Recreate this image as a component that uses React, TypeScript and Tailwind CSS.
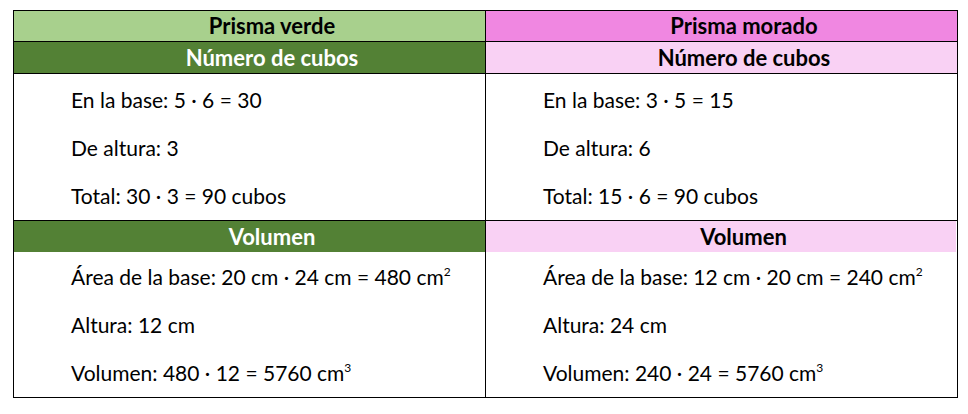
import React from "react";

const font = { fontFamily: "Lato, 'Open Sans', sans-serif" };

function Line({ children }: { children: React.ReactNode }) {
  return <div className="h-[48px] flex items-center pl-[57px] text-[21px] text-black leading-none">{children}</div>;
}

function Sup({ children }: { children: React.ReactNode }) {
  return <span className="text-[12px] relative -top-[9px] align-baseline leading-none">{children}</span>;
}

const head = "flex items-center justify-center pl-[45px] font-bold text-[22px] leading-none";

export default function App() {
  return (
    <div className="w-[968px] h-[414px] bg-white pt-[10px] pl-[13px]" style={font}>
      <div className="w-[945px] border border-black grid grid-cols-[471px_1px_471px]">
        {/* Row 1 */}
        <div className={`h-[31px] bg-[#A8D08D] text-black border-b border-black ${head}`}>Prisma verde</div>
        <div className="bg-black" />
        <div className={`h-[31px] bg-[#F087E1] text-black border-b border-black ${head}`}>Prisma morado</div>
        {/* Row 2 */}
        <div className={`h-[32px] bg-[#538135] text-white border-b border-black ${head}`}>Número de cubos</div>
        <div className="bg-black" />
        <div className={`h-[32px] bg-[#F9D1F4] text-black border-b border-black ${head}`}>Número de cubos</div>
        {/* Row 3 */}
        <div className="h-[147px] pt-[1px] border-b border-black">
          <Line>En la base: 5 · 6 = 30</Line>
          <Line>De altura: 3</Line>
          <Line>Total: 30 · 3 = 90 cubos</Line>
        </div>
        <div className="bg-black" />
        <div className="h-[147px] pt-[1px] border-b border-black">
          <Line>En la base: 3 · 5 = 15</Line>
          <Line>De altura: 6</Line>
          <Line>Total: 15 · 6 = 90 cubos</Line>
        </div>
        {/* Row 4 */}
        <div className={`h-[31px] bg-[#538135] text-white ${head}`}>Volumen</div>
        <div className="bg-black" />
        <div className={`h-[31px] bg-[#F9D1F4] text-black mr-[1px] ${head}`}>Volumen</div>
        {/* Row 5 */}
        <div className="h-[145px]">
          <Line>
            <span>Área de la base: 20 cm · 24 cm = 480 cm<Sup>2</Sup></span>
          </Line>
          <Line>Altura: 12 cm</Line>
          <Line>
            <span>Volumen: 480 · 12 = 5760 cm<Sup>3</Sup></span>
          </Line>
        </div>
        <div className="bg-black" />
        <div className="h-[145px]">
          <Line>
            <span>Área de la base: 12 cm · 20 cm = 240 cm<Sup>2</Sup></span>
          </Line>
          <Line>Altura: 24 cm</Line>
          <Line>
            <span>Volumen: 240 · 24 = 5760 cm<Sup>3</Sup></span>
          </Line>
        </div>
      </div>
    </div>
  );
}
